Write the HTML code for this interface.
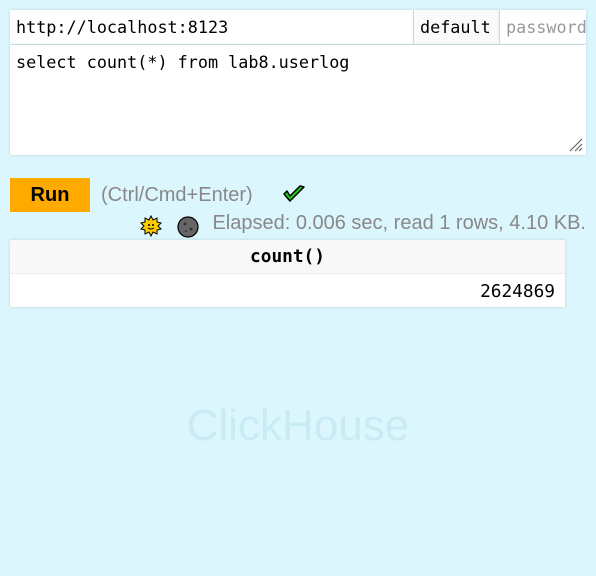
<!DOCTYPE html>
<html><head><style>
body{margin:0;width:596px;height:576px;background:#dcf6fe;font-family:"Liberation Sans",sans-serif;position:relative;overflow:hidden}
.box{position:absolute;background:#fff;box-shadow:0 0 3px rgba(0,0,0,.15);font-family:"DejaVu Sans Mono","Liberation Mono",monospace;font-size:16.8px;color:#000;box-sizing:border-box}
</style></head><body>
<div class="box" style="left:10px;top:10px;width:403px;height:34px;padding:7px 6px">http://localhost:8123</div>
<div class="box" style="left:414px;top:10px;width:85px;height:34px;padding:7px 6px;background:#fafafa">default</div>
<div class="box" style="left:500px;top:10px;width:86px;height:34px;padding:7px 6px;color:#999;overflow:hidden;white-space:nowrap">password</div>
<div class="box" style="left:10px;top:45px;width:576px;height:110px;padding:7px 6px">select count(*) from lab8.userlog
<svg style="position:absolute;right:3px;bottom:3px" width="16" height="16"><path d="M15 3L3 15M15 8L8 15M15 12L12 15" stroke="#666" stroke-width="1.2"/></svg></div>
<div style="position:absolute;left:10px;top:178px;width:80px;height:34px;background:#ffaa00;font-weight:bold;font-size:20px;text-align:center;line-height:34px">Run</div>
<div style="position:absolute;left:101px;top:184px;font-size:20px;color:#888">(Ctrl/Cmd+Enter)</div>
<svg style="position:absolute;left:282px;top:184px" width="24" height="20"><path d="M2 10L8 17L22 3L18 2L8 12L5 7Z" fill="#2c2" stroke="#000" stroke-width="1.5" stroke-linejoin="round"/></svg>
<svg style="position:absolute;left:140px;top:215px" width="22" height="22"><polygon points="11,1 13,5 17,3 17,7 21,8 18,11 21,14 17,15 17,19 13,17 11,21 9,17 5,19 5,15 1,14 4,11 1,8 5,7 5,3 9,5" fill="#fc0" stroke="#000" stroke-width="1"/><circle cx="9" cy="10" r="1" fill="#000"/><circle cx="13" cy="10" r="1" fill="#000"/><path d="M8 13Q11 15 14 13" stroke="#000" fill="none"/></svg>
<svg style="position:absolute;left:177px;top:215px" width="22" height="24"><circle cx="11" cy="12" r="10" fill="#666" stroke="#000" stroke-width="1.2"/><circle cx="8" cy="9" r="1.5" fill="#333"/><circle cx="14" cy="14" r="1.5" fill="#333"/><circle cx="9" cy="16" r="1" fill="#333"/></svg>
<div style="position:absolute;right:10px;top:212px;font-size:20px;color:#888">Elapsed: 0.006 sec, read 1 rows, 4.10 KB.</div>
<div style="position:absolute;left:10px;top:240px;width:555px;height:67px;background:#fff;box-shadow:0 0 3px rgba(0,0,0,.15);font-family:'DejaVu Sans Mono',monospace;font-size:17.8px">
<div style="height:33px;background:#f8f8f8;border-bottom:1px solid #eee;text-align:center;line-height:33px;font-weight:bold">count()</div>
<div style="height:33px;line-height:35px;text-align:right;padding-right:10px">2624869</div>
</div>
<div style="position:absolute;left:0;width:596px;top:401px;text-align:center;font-size:44px;color:#c8ebf4">ClickHouse</div>
</body></html>
